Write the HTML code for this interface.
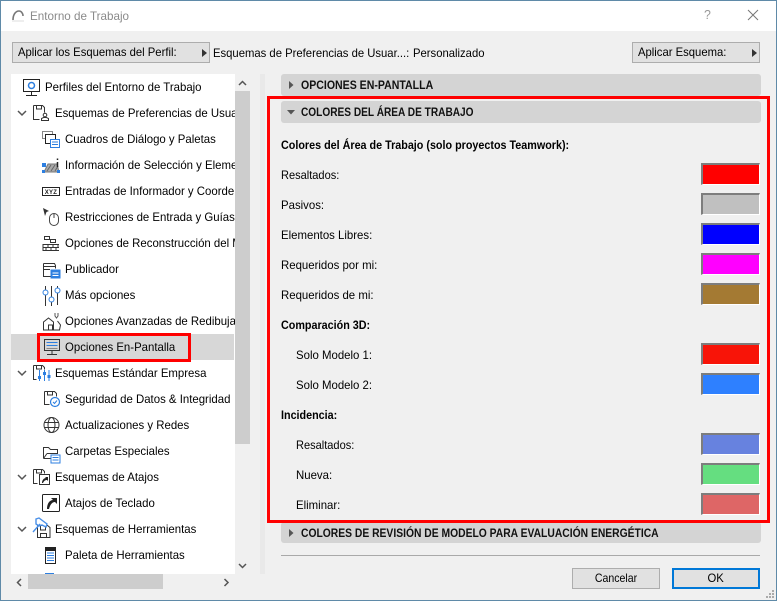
<!DOCTYPE html>
<html><head><meta charset="utf-8"><style>
html,body{margin:0;padding:0}
body{width:777px;height:601px;overflow:hidden;position:relative;background:#f0f0f0;font-family:"Liberation Sans",sans-serif;font-size:12px;color:#000}
div{position:absolute;box-sizing:border-box;white-space:nowrap}
svg{position:absolute;overflow:visible;fill:none}
span{display:inline-block}
.t{height:16px;line-height:16px;transform:scaleX(.95);transform-origin:0 50%}
.b{font-weight:bold;transform:scaleX(.897)}
.btn{background:#e1e1e1;border:1px solid #adadad;height:21px;line-height:19px}
.btn span{transform:scaleX(.94);transform-origin:0 50%}
.hd{left:281px;width:480px;height:22px;background:#d4d4d4;border-radius:3px;line-height:22px;font-weight:bold;padding-left:20px;color:#111}
.hd span{transform-origin:0 50%}
.sw{left:701px;width:59px;height:22px;border-style:solid;border-width:2px 1px 1px 2px;border-color:#7d7d7d #fff #fff #7d7d7d}
</style></head><body>

<!-- window chrome -->
<div style="left:0;top:0;width:777px;height:31px;background:#fff"></div>
<svg style="left:11px;top:8px" width="14" height="14"><path d="M2 12C2 6 5 3 8 3 10 3 12 5 12 8" stroke="#777" stroke-width="1.6"/><path d="M1 13H13" stroke="#ddd"/></svg>
<div class="t" style="left:30px;top:8px;color:#8a8a8a;transform:scaleX(.97)">Entorno de Trabajo</div>
<div class="t" style="left:704px;top:7px;color:#999;font-size:13px">?</div>
<svg style="left:747px;top:9px" width="12" height="12"><path d="M1 1L11 11M11 1L1 11" stroke="#777"/></svg>

<!-- top bar -->
<div class="btn" style="left:12px;top:42px;width:198px;padding-left:5px"><span>Aplicar los Esquemas del Perfil:</span></div>
<svg style="left:202px;top:49px" width="6" height="8"><path d="M0 0L5 4L0 8Z" fill="#333"/></svg>
<div class="t" style="left:213px;top:45px;transform:scaleX(.94)">Esquemas de Preferencias de Usuar...:</div>
<div class="t" style="left:413px;top:45px;transform:scaleX(.94)">Personalizado</div>
<div class="btn" style="left:632px;top:42px;width:128px;padding-left:5px"><span>Aplicar Esquema:</span></div>
<svg style="left:752px;top:49px" width="6" height="8"><path d="M0 0L5 4L0 8Z" fill="#333"/></svg>

<!-- tree -->
<div style="left:11px;top:74px;width:224px;height:500px;background:#fff;overflow:hidden" id="tree">
<div style="left:0;top:260px;width:223px;height:26px;background:#d7d7d7"></div>
<div class="t" style="left:34px;top:5px">Perfiles del Entorno de Trabajo</div>
<div class="t" style="left:44px;top:31px">Esquemas de Preferencias de Usuario</div>
<div class="t" style="left:54px;top:57px">Cuadros de Diálogo y Paletas</div>
<div class="t" style="left:54px;top:83px">Información de Selección y Elementos</div>
<div class="t" style="left:54px;top:109px">Entradas de Informador y Coordenadas</div>
<div class="t" style="left:54px;top:135px">Restricciones de Entrada y Guías</div>
<div class="t" style="left:54px;top:161px">Opciones de Reconstrucción del Modelo</div>
<div class="t" style="left:54px;top:187px">Publicador</div>
<div class="t" style="left:54px;top:213px">Más opciones</div>
<div class="t" style="left:54px;top:239px">Opciones Avanzadas de Redibujado</div>
<div class="t" style="left:54px;top:265px">Opciones En-Pantalla</div>
<div class="t" style="left:44px;top:291px">Esquemas Estándar Empresa</div>
<div class="t" style="left:54px;top:317px">Seguridad de Datos &amp; Integridad</div>
<div class="t" style="left:54px;top:343px">Actualizaciones y Redes</div>
<div class="t" style="left:54px;top:369px">Carpetas Especiales</div>
<div class="t" style="left:44px;top:395px">Esquemas de Atajos</div>
<div class="t" style="left:54px;top:421px">Atajos de Teclado</div>
<div class="t" style="left:44px;top:447px">Esquemas de Herramientas</div>
<div class="t" style="left:54px;top:473px">Paleta de Herramientas</div>
<svg style="left:0;top:0" width="224" height="500">
<g stroke="#555" stroke-width="1.500"><path d="M7 37l4 4 4-4M7 297l4 4 4-4M7 401l4 4 4-4M7 453l4 4 4-4"/></g>
<!-- Perfiles -->
<g stroke="#222"><rect x="12.500" y="5.500" width="16" height="12"/><path d="M20.500 18v3M15 21.500H26"/></g><circle cx="20.500" cy="11.500" r="3" stroke="#2d7fe0" stroke-width="1.500"/>
<!-- save user -->
<g stroke="#333"><path d="M22.500 31.500h9l2 2v5M22.500 31.500v14h6M25.500 32v3h5v-3"/><circle cx="34" cy="41" r="1.800"/><path d="M30.500 46.500v-2l2-1h3l2 1v2z"/></g>
<!-- cuadros -->
<g><rect x="31.500" y="57.500" width="10" height="7" stroke="#888"/><rect x="34.500" y="60.500" width="10" height="9" stroke="#222" fill="#fff"/><rect x="39.500" y="65.500" width="9" height="8" fill="#fff" stroke="#2d7fe0"/><path d="M41 68h6M41 70.500h6" stroke="#2d7fe0"/></g>
<!-- info -->
<path d="M33 98L37 90H46L48 98Z" fill="#aaa" stroke="#777"/><path d="M36 97l4-6M40 97l4-6M44 97l3-5" stroke="#666"/><rect x="31" y="89" width="4" height="4" fill="#2d7fe0"/><rect x="31" y="96" width="3" height="3" fill="#2d7fe0"/><rect x="46" y="96" width="3" height="3" fill="#2d7fe0"/><path d="M46.500 84.500v1.500M46.500 88v5" stroke="#222" stroke-width="1.500"/>
<!-- xyz -->
<rect x="31.500" y="113.500" width="17" height="8" stroke="#222"/><text x="40" y="120" font-family="Liberation Sans" font-size="6" font-weight="bold" text-anchor="middle" fill="#222" stroke="none" letter-spacing="0.300">XYZ</text>
<!-- mouse -->
<path d="M32 134l6 3-2.500 1-1.500 4z" fill="#333"/><rect x="38.500" y="139.500" width="9" height="12" rx="4.500" stroke="#444"/><path d="M43 140v4" stroke="#444"/>
<!-- bricks -->
<g stroke="#333"><rect x="33.500" y="162.500" width="5" height="3"/><rect x="39.500" y="165.500" width="5" height="3"/><path d="M32 170.500H48M32 173.500H48M32 176.500H48M32 170v7M37 170v3M42 170v3M47 170v3M35 173v3M40 173v3M45 173v3M37 176v1M42 176v1"/></g>
<!-- publicador -->
<g><path d="M32.500 189.500h11l1 2v3M32.500 189.500v13h7" stroke="#333"/><path d="M33 192.500h11M33 195.500h6" stroke="#333"/><rect x="40" y="196" width="9" height="8" fill="#2d7fe0" stroke="#2d7fe0"/><path d="M41.500 199h6M41.500 201.500h6" stroke="#fff"/></g>
<!-- sliders -->
<g stroke="#333"><path d="M34.500 212v4M34.500 221v11M40.500 212v11M40.500 228v4M46.500 212v2M46.500 219v12"/></g><g stroke="#2d7fe0"><circle cx="34.500" cy="218.500" r="2.500"/><circle cx="40.500" cy="225.500" r="2.500"/><circle cx="46.500" cy="216.500" r="2.500"/></g>
<!-- redibujado -->
<g stroke="#333"><path d="M32.500 256v-8l5-4 5 4v8zM32.500 256h16l1-5-3-4M37.500 256v-5h4v5"/><path d="M44 239v3l1.500 2 1.500-2v-3" stroke="#555"/></g>
<!-- pantalla -->
<g stroke="#333"><rect x="33.500" y="265.500" width="15" height="11"/><path d="M41 277v3M36 280.500H46"/></g><path d="M35.500 268.500h11M35.500 271.500h11" stroke="#2d7fe0"/><path d="M35.500 274.500h11" stroke="#888"/>
<!-- estandar -->
<g stroke="#333"><path d="M22.500 291.500h9l2 2v2M22.500 291.500v14h3M25.500 292v3h5v-3"/></g><path d="M28.500 296v11M33.500 296v11M38 296v11" stroke="#2d7fe0"/><g fill="#2d7fe0"><rect x="27" y="302" width="3" height="3"/><rect x="32" y="298" width="3" height="3"/><rect x="36.500" y="301" width="3" height="3"/></g>
<!-- seguridad -->
<g stroke="#333"><path d="M33.500 317.500h10l2 2v3M33.500 317.500v13h5M36.500 318v3h5v-3"/></g><circle cx="44" cy="328" r="4.500" stroke="#2d7fe0" stroke-width="1.200" fill="#fff"/><path d="M42 328l1.500 1.500 2.500-3" stroke="#2d7fe0"/>
<!-- globo -->
<g stroke="#333"><circle cx="40.500" cy="351" r="7.500"/><ellipse cx="40.500" cy="351" rx="3.500" ry="7.500"/><path d="M33.500 348.500h14M33.500 353.500h14"/></g>
<!-- carpetas -->
<path d="M32.500 384.500v-11h5l2 2h7v4M32.500 384.500h7M36 379.500h11M36 379.500l-3.500 5" stroke="#333"/><rect x="40" y="381" width="9" height="8" fill="#fff" stroke="#2d7fe0"/><path d="M41.500 383.500h6M41.500 386h6" stroke="#2d7fe0"/>
<!-- atajos -->
<g stroke="#333"><path d="M22.500 395.500h9l2 2v2M22.500 395.500v14h4M25.500 396v3h5v-3"/><rect x="28.500" y="400.500" width="10" height="10" fill="#fff"/></g><path d="M31 409c0-3 2-5 4-5l-1-1h3v4l-1-1c-2 0-3 1-4 3z" fill="#222"/>
<!-- atajo teclado -->
<rect x="31.500" y="420.500" width="17" height="17" rx="1" stroke="#222"/><path d="M36 435c0-6 3-9 6-9l-2-2h6v6l-2-2c-3 0-5 3-6 7z" fill="#222"/>
<!-- herramientas -->
<path d="M26.500 451.500v12h12.500v-10l-2.500-2zM29.500 452v4h5v-4M29.500 463.500v-4h6v4" stroke="#333" fill="#fff"/>
<path d="M22 458l7-8M25 445l3-1 8 6-1 3-4-2-3 1-3-2z" stroke="#4a90e8" stroke-width="1.400" fill="#fff"/>
<!-- paleta -->
<rect x="34.500" y="473.500" width="10" height="16" stroke="#222"/><rect x="35" y="474" width="9" height="3" fill="#222"/><path d="M36 479h7M36 481.500h7M36 484h7M36 486.500h7" stroke="#2d7fe0"/>
<!-- bottom partial -->
<rect x="34" y="499" width="9" height="2" fill="#2d7fe0"/>
</svg>
</div>
<!-- selection highlight -->
<div style="left:37px;top:333px;width:154px;height:29px;border:3px solid #f00"></div>

<!-- v scrollbar -->
<div style="left:235px;top:74px;width:15px;height:500px;background:#f0f0f0"></div>
<div style="left:235px;top:91px;width:15px;height:353px;background:#cdcdcd"></div>
<svg style="left:238px;top:80px" width="10" height="6"><path d="M1 5L4.500 1.500L8 5" stroke="#555" stroke-width="1.500"/></svg>
<svg style="left:238px;top:563px" width="10" height="6"><path d="M1 1L4.500 4.500L8 1" stroke="#555" stroke-width="1.500"/></svg>
<!-- h scrollbar -->
<div style="left:28px;top:574px;width:135px;height:15px;background:#cdcdcd"></div>
<svg style="left:16px;top:578px" width="7" height="9"><path d="M5 1L1.500 4.500L5 8" stroke="#555" stroke-width="1.500"/></svg>
<svg style="left:223px;top:578px" width="7" height="9"><path d="M1.500 1L5 4.500L1.500 8" stroke="#555" stroke-width="1.500"/></svg>
<div style="left:260px;top:74px;width:5px;height:500px;background:#e9e9e9"></div>

<!-- right panel -->
<div class="hd" style="top:74px"><span style="transform:scaleX(.88)">OPCIONES EN-PANTALLA</span></div>
<svg style="left:289px;top:81px" width="5" height="8"><path d="M0 0L4.500 4L0 8Z" fill="#555"/></svg>
<div class="hd" style="top:101px"><span style="transform:scaleX(.843)">COLORES DEL ÁREA DE TRABAJO</span></div>
<svg style="left:287px;top:110px" width="8" height="5"><path d="M0 0H8L4 4.500Z" fill="#555"/></svg>
<div class="t b" style="left:281px;top:137px">Colores del Área de Trabajo (solo proyectos Teamwork):</div>
<div class="t" style="left:281px;top:167px;transform:scaleX(.92)">Resaltados:</div>
<div class="t" style="left:281px;top:197px">Pasivos:</div>
<div class="t" style="left:281px;top:227px">Elementos Libres:</div>
<div class="t" style="left:281px;top:257px">Requeridos por mi:</div>
<div class="t" style="left:281px;top:287px">Requeridos de mi:</div>
<div class="t b" style="left:281px;top:317px">Comparación 3D:</div>
<div class="t" style="left:296px;top:347px">Solo Modelo 1:</div>
<div class="t" style="left:296px;top:377px">Solo Modelo 2:</div>
<div class="t b" style="left:281px;top:407px">Incidencia:</div>
<div class="t" style="left:296px;top:437px;transform:scaleX(.92)">Resaltados:</div>
<div class="t" style="left:296px;top:467px">Nueva:</div>
<div class="t" style="left:296px;top:497px">Eliminar:</div>
<div class="sw" style="top:163px;background:#f00"></div>
<div class="sw" style="top:193px;background:#c0c0c0"></div>
<div class="sw" style="top:223px;background:#00f"></div>
<div class="sw" style="top:253px;background:#f0f"></div>
<div class="sw" style="top:283px;background:#a47a33"></div>
<div class="sw" style="top:343px;background:#f81408"></div>
<div class="sw" style="top:373px;background:#2e80ff"></div>
<div class="sw" style="top:433px;background:#6782df"></div>
<div class="sw" style="top:463px;background:#65de80"></div>
<div class="sw" style="top:493px;background:#de6666"></div>
<div class="hd" style="top:522px;height:21px"><span style="transform:scaleX(.86)">COLORES DE REVISIÓN DE MODELO PARA EVALUACIÓN ENERGÉTICA</span></div>
<svg style="left:289px;top:529px" width="5" height="8"><path d="M0 0L4.500 4L0 8Z" fill="#555"/></svg>
<div style="left:267px;top:96px;width:503px;height:427px;border:3px solid #f00"></div>
<div style="left:281px;top:555px;width:479px;height:1px;background:#a9a9a9"></div>
<div class="btn" style="left:572px;top:568px;width:88px;text-align:center"><span style="transform:scaleX(.88);transform-origin:50% 50%">Cancelar</span></div>
<div class="btn" style="left:672px;top:568px;width:88px;text-align:center;border:2px solid #0078d7;line-height:17px"><span style="transform-origin:50% 50%">OK</span></div>
<svg style="left:764px;top:589px" width="12" height="11"><g fill="#aaa"><rect x="8" y="1" width="2" height="2"/><rect x="5" y="4" width="2" height="2"/><rect x="8" y="4" width="2" height="2"/><rect x="2" y="7" width="2" height="2"/><rect x="5" y="7" width="2" height="2"/><rect x="8" y="7" width="2" height="2"/></g></svg>

<!-- window border -->
<div style="left:0;top:0;width:777px;height:601px;border:1px solid #5f8aa8;pointer-events:none"></div>
</body></html>
